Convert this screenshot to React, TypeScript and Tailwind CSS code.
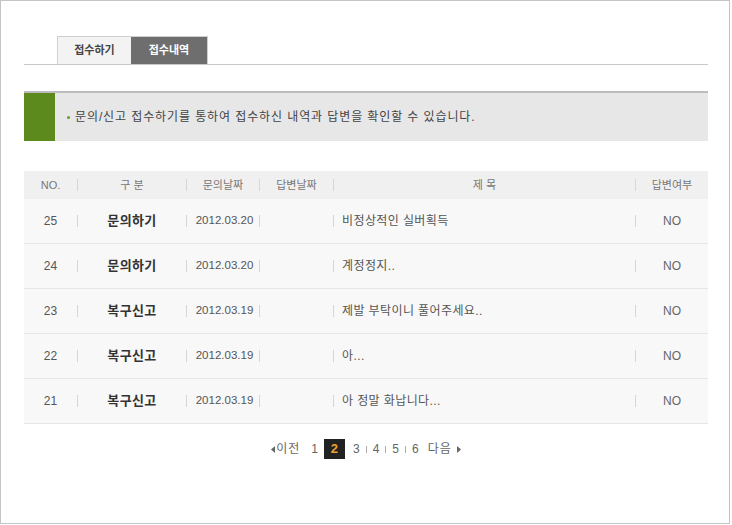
import React from 'react';

const rows = [
  { no: 25, kind: '문의하기', date: '2012.03.20', title: '비정상적인 실버획득' },
  { no: 24, kind: '문의하기', date: '2012.03.20', title: '계정정지..' },
  { no: 23, kind: '복구신고', date: '2012.03.19', title: '제발 부탁이니 풀어주세요..' },
  { no: 22, kind: '복구신고', date: '2012.03.19', title: '아...' },
  { no: 21, kind: '복구신고', date: '2012.03.19', title: '아 정말 화납니다...' },
];

const Sep = () => <span className="w-px h-[12px] bg-[#d6d6d6] shrink-0" />;
const PageSep = () => <span className="mx-[6px] w-px h-[7px] bg-[#aaa]" />;

export default function App() {
  return (
    <div
      className="w-[730px] h-[524px] border border-[#c4c4c4] bg-white pl-[23px] pt-[35px]"
      style={{ fontFamily: '"Liberation Sans", "Noto Sans CJK KR", sans-serif' }}
    >
      <div className="w-[684px]">
        {/* tabs */}
        <div className="flex h-[29px] border-b border-[#c8c8c8] pl-[33px]">
          <div className="w-[74px] h-[28px] flex items-center justify-center bg-[#f3f3f3] border-l border-t border-[#cfcfcf] text-[11px] font-bold text-[#444]">
            접수하기
          </div>
          <div className="w-[77px] h-[28px] flex items-center justify-center bg-[#6e6e6e] border-t border-r border-[#cfcfcf] text-[11px] font-bold text-white">
            접수내역
          </div>
        </div>

        {/* info box */}
        <div className="mt-[26px] flex h-[50px] bg-[#e7e7e7] border-t-2 border-[#bdbdbd]">
          <div className="w-[31px] bg-[#5c8a1c]" />
          <div className="flex items-center pl-[12px] text-[12px] text-[#444] tracking-[0.9px]">
            <span className="w-[3px] h-[3px] rounded-full bg-[#6a9a2a] mr-[5px]" />
            문의/신고 접수하기를 통하여 접수하신 내역과 답변을 확인할 수 있습니다.
          </div>
        </div>

        {/* table */}
        <div className="mt-[30px]">
          <div className="flex items-center h-[28px] bg-[#f0f0f0] text-[11px] text-[#777]">
            <div className="w-[53px] text-center">NO.</div>
            <Sep />
            <div className="w-[108px] text-center">구 분</div>
            <Sep />
            <div className="w-[72px] text-center">문의날짜</div>
            <Sep />
            <div className="w-[73px] text-center">답변날짜</div>
            <Sep />
            <div className="w-[301px] text-center">제 목</div>
            <Sep />
            <div className="w-[72px] text-center">답변여부</div>
          </div>
          {rows.map((r) => (
            <div
              key={r.no}
              className="flex items-center h-[45px] bg-[#f8f8f8] border-b border-[#e6e6e6] text-[12px] text-[#555]"
            >
              <div className="w-[53px] text-center">{r.no}</div>
              <Sep />
              <div className="w-[108px] text-center text-[13px] font-bold text-[#333] tracking-[0.4px]">{r.kind}</div>
              <Sep />
              <div className="w-[72px] text-center text-[11.5px] pl-[3px]">{r.date}</div>
              <Sep />
              <div className="w-[73px]" />
              <Sep />
              <div className="w-[301px] pl-[8px] tracking-[0.4px]">{r.title}</div>
              <Sep />
              <div className="w-[72px] text-center text-[#666]">NO</div>
            </div>
          ))}
        </div>

        {/* pagination */}
        <div className="mt-[15px] flex items-center justify-center h-[20px] text-[12px] text-[#666]">
          <svg width="4" height="7" viewBox="0 0 4 7" className="mr-[1px]">
            <path d="M4 0 L0 3.5 L4 7 Z" fill="#666" />
          </svg>
          <span className="tracking-[1px]">이전</span>
          <span className="ml-[11px]">1</span>
          <span className="ml-[6px] w-[21px] h-[20px] bg-[#222] text-[#f0a030] font-bold text-[13px] flex items-center justify-center">
            2
          </span>
          <span className="ml-[8px]">3</span>
          <PageSep />
          <span>4</span>
          <PageSep />
          <span>5</span>
          <PageSep />
          <span>6</span>
          <span className="ml-[9px] tracking-[1px]">다음</span>
          <svg width="4" height="7" viewBox="0 0 4 7" className="ml-[5px]">
            <path d="M0 0 L4 3.5 L0 7 Z" fill="#666" />
          </svg>
        </div>
      </div>
    </div>
  );
}
